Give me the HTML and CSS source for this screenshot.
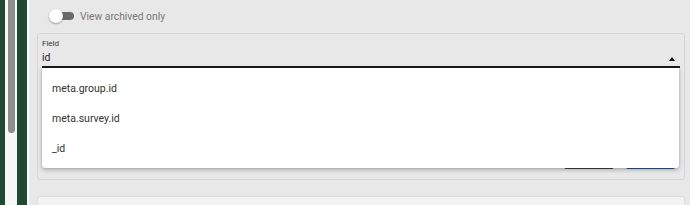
FILE: index.html
```html
<!DOCTYPE html>
<html lang="en">
<head>
    <meta charset="UTF-8">
    <title>Filter</title>
    <link rel="stylesheet" href="styles.css">
</head>
<body>
    <div class="side">
        <div class="green wide"></div>
        <div class="track"><div class="thumb"></div></div>
        <div class="green narrow"></div>
        <div class="edge"></div>
    </div>
    <div class="main">
        <div class="toggleRow">
            <span class="toggle"><span class="knob"></span></span>
            <span class="toggleText">View archived only</span>
        </div>
        <div class="panel">
            <div class="field">
                <div class="fieldLabel">Field</div>
                <div class="fieldInput">id<span class="arrow"></span></div>
                <ul class="menu">
                    <li class="menuItem">meta.group.id</li>
                    <li class="menuItem">meta.survey.id</li>
                    <li class="menuItem">_id</li>
                </ul>
            </div>
            <div class="btnRow">
                <button class="btn btnOutline">Cancel</button>
                <button class="btn btnBlue">Apply</button>
            </div>
        </div>
        <div class="panel2"></div>
    </div>
</body>
</html>
```

FILE: styles.css
```css
*{margin:0;padding:0;box-sizing:border-box;}
li{list-style: none;}
html,body{height:100%;overflow:hidden;}
body{
    display: flex;
    font-family: Roboto, "Liberation Sans", sans-serif;
    background: #e8e8e8;
}
.side{
    display: flex;
    width: 29px;
    height: 100%;
    flex-shrink: 0;
}
.green{background: #1f4a30;}
.wide{width: 5px;}
.narrow{width: 10px;}
.track{
    width: 12px;
    background: #f7f7f7;
    padding: 0 2px 0 3px;
}
.thumb{
    width: 7px;
    height: 133px;
    background: #8e8e8e;
    border-radius: 0 0 4px 4px;
}
.edge{width: 2px;background: #fafafa;}
.main{
    flex: 1;
    padding: 0 5px 0 8px;
}
.toggleRow{
    height: 33px;
    display: flex;
    align-items: center;
    padding: 0 0 1px 11px;
}
.toggle{
    position: relative;
    width: 26px;
    height: 8px;
    display: inline-block;
}
.toggle::before{
    content: "";
    position: absolute;
    left: 4px;
    right: 0;
    top: 0;
    bottom: 0;
    background: #6a6a6a;
    border-radius: 4px;
}
.knob{
    position: absolute;
    left: 1px;
    top: -3px;
    width: 14px;
    height: 14px;
    border-radius: 50%;
    background: #fff;
    box-shadow: 0 1px 2px rgba(0,0,0,0.35);
}
.toggleText{
    margin-left: 6px;
    font-size: 10.3px;
    color: #777;
}
.panel{
    border: 1px solid #d5d5d5;
    border-radius: 3px;
    padding: 5px 9px 10px 4px;
}
.field{
    position: relative;
    margin-right: -5px;
}
.fieldLabel{
    font-size: 8px;
    line-height: 10px;
    color: #333;
}
.fieldInput{
    position: relative;
    font-size: 10.5px;
    line-height: 14px;
    padding: 2px 0 1px;
    color: #222;
    border-bottom: 2px solid #1c1c1c;
}
.arrow{
    position: absolute;
    right: 5px;
    top: 8px;
    border-left: 3px solid transparent;
    border-right: 3px solid transparent;
    border-bottom: 4px solid #111;
}
.menu{
    position: absolute;
    left: 0;
    right: 1px;
    top: 29px;
    padding: 6px 0 4px;
    background: #fff;
    border-radius: 0 0 3px 3px;
    box-shadow: 0 2px 4px rgba(0,0,0,0.25), 0 0 2px rgba(0,0,0,0.15);
    z-index: 10;
}
.menuItem{
    font-size: 10.5px;
    line-height: 30px;
    padding-left: 10px;
    color: #333;
}
.btnRow{
    display: flex;
    justify-content: flex-end;
    gap: 12px;
    margin-top: 75px;
}
.btn{
    width: 50px;
    height: 26px;
    border-radius: 2px;
    font-size: 10px;
    font-family: Roboto, sans-serif;
}
.btnOutline{
    background: #f0f0f0;
    border: 1px solid #444;
    color: #333;
}
.btnBlue{
    width: 49px;
    background: #1b5ca6;
    border: none;
    color: #fff;
}
.panel2{
    margin-top: 16px;
    height: 40px;
    background: #f3f3f3;
    border: 1px solid #dcdcdc;
    border-radius: 3px;
}
```
